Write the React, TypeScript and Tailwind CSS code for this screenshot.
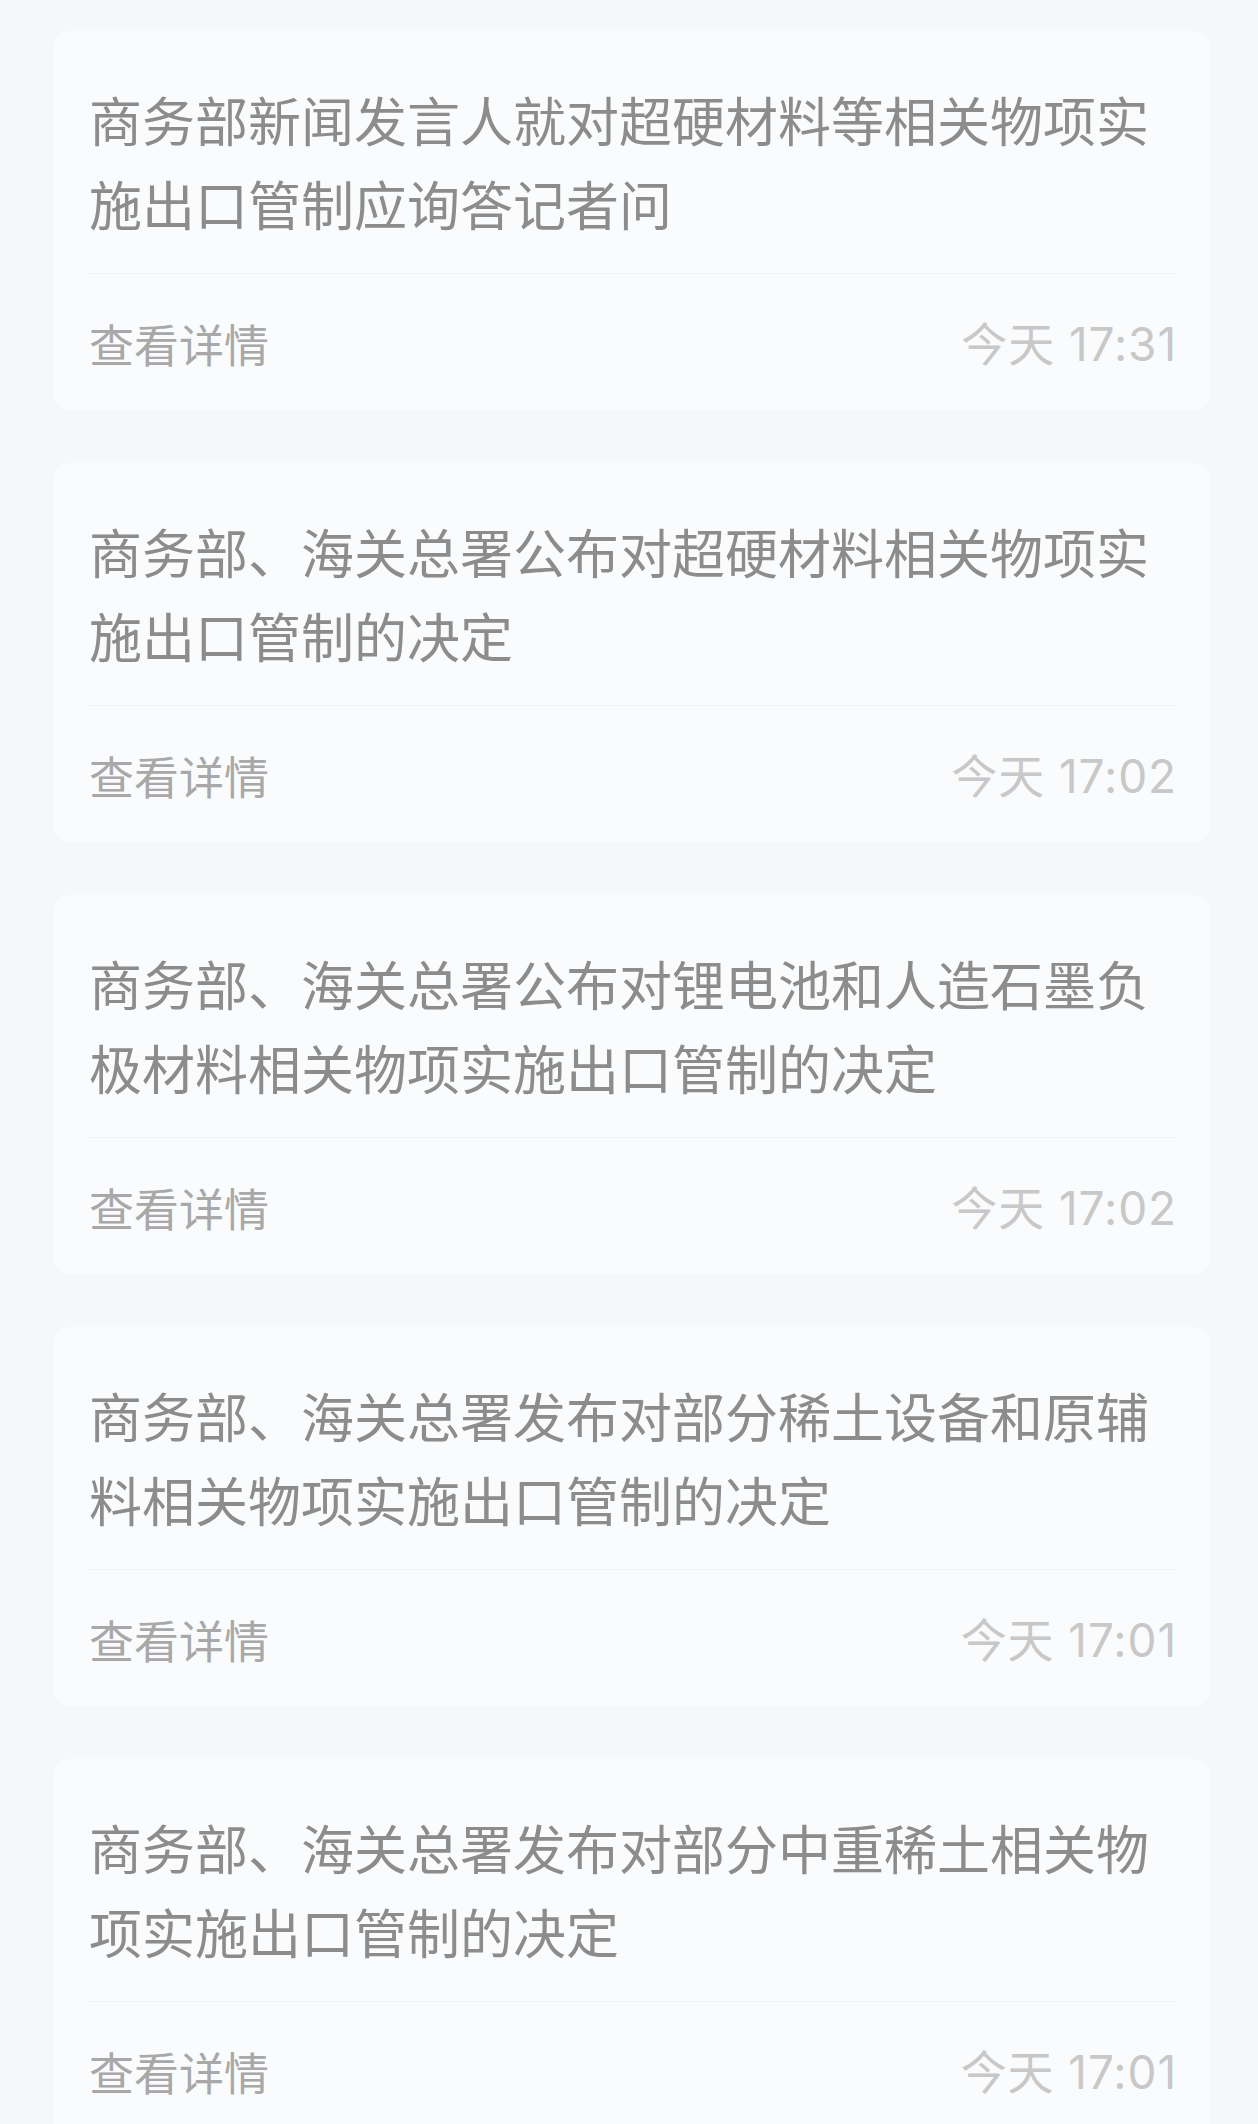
const items = [
  {
    title: "商务部新闻发言人就对超硬材料等相关物项实施出口管制应询答记者问",
    time: "今天 17:31",
  },
  {
    title: "商务部、海关总署公布对超硬材料相关物项实施出口管制的决定",
    time: "今天 17:02",
  },
  {
    title: "商务部、海关总署公布对锂电池和人造石墨负极材料相关物项实施出口管制的决定",
    time: "今天 17:02",
  },
  {
    title: "商务部、海关总署发布对部分稀土设备和原辅料相关物项实施出口管制的决定",
    time: "今天 17:01",
  },
  {
    title: "商务部、海关总署发布对部分中重稀土相关物项实施出口管制的决定",
    time: "今天 17:01",
  },
];

function NewsCard({ title, time }: { title: string; time: string }) {
  return (
    <div className="rounded-[16px] bg-[#fafbfc] pl-[36px] pr-[34px]">
      <div className="pt-[46px] pb-[28px] text-[53px] leading-[84px] text-[#8c8c8c]">
        {title}
      </div>
      <div className="h-px bg-[#f0f1f2]" />
      <div className="flex h-[136px] items-center justify-between pt-[4px]">
        <span className="text-[45px] text-[#a8a8a8]">查看详情</span>
        <span
          className="-mr-[1px] text-[46px] tracking-[0.9px] text-[#c8c8c8]"
          style={{ fontFamily: 'Inter, "Noto Sans CJK SC", sans-serif' }}
        >
          {time}
        </span>
      </div>
    </div>
  );
}

export default function App() {
  return (
    <div
      className="min-h-screen bg-[#f6f7f9] pt-[31px] pb-[40px] pl-[53px] pr-[48px]"
      style={{ fontFamily: '"Noto Sans CJK SC", "Noto Sans", sans-serif' }}
    >
      <div className="flex flex-col gap-[53px]">
        {items.map((item, i) => (
          <NewsCard key={i} title={item.title} time={item.time} />
        ))}
      </div>
    </div>
  );
}
